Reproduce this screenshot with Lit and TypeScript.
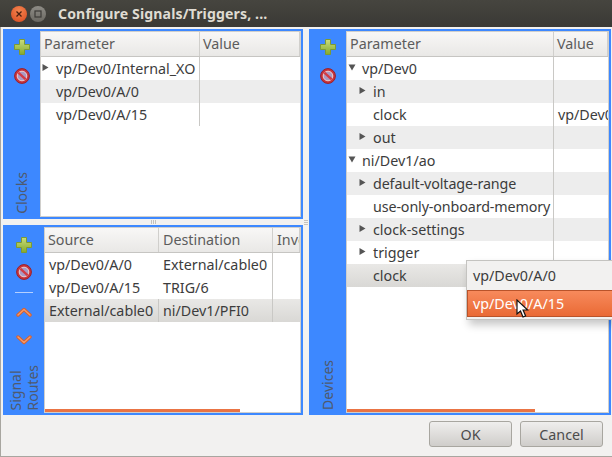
import { LitElement, html, css } from "lit";
import { customElement } from "lit/decorators.js";

const plus = html`<svg class="ico" width="16" height="16" viewBox="0 0 16 16"><defs><linearGradient id="pg" x1="0" y1="0" x2="0" y2="1"><stop offset="0" stop-color="#c9dd7c"/><stop offset="1" stop-color="#86a92c"/></linearGradient></defs><path d="M5.5 .5h5v5h5v5h-5v5h-5v-5h-5v-5h5z" fill="url(#pg)" stroke="#7c9a34"/></svg>`;
const stop = html`<svg class="ico" width="16" height="16" viewBox="0 0 16 16"><circle cx="8" cy="8" r="7.4" fill="#c9343c" stroke="#9a2029"/><circle cx="8" cy="8" r="4.8" fill="#a99ac4" stroke="#f0d0d0" stroke-width="1"/><path d="M4.3 4.6l7.4 6.8" stroke="#d23c44" stroke-width="2.4"/></svg>`;
const up = html`<svg class="ico" width="16" height="12" viewBox="0 0 16 12"><path d="M2 9l6-5.5 6 5.5" fill="none" stroke="#d9602c" stroke-width="3.4" stroke-linejoin="round" stroke-linecap="round"/><path d="M2 9l6-5.5 6 5.5" fill="none" stroke="#f59a6a" stroke-width="1.4" stroke-linejoin="round" stroke-linecap="round"/></svg>`;
const down = html`<svg class="ico" width="16" height="12" viewBox="0 0 16 12"><path d="M2 3l6 5.5 6-5.5" fill="none" stroke="#d9602c" stroke-width="3.4" stroke-linejoin="round" stroke-linecap="round"/><path d="M2 3l6 5.5 6-5.5" fill="none" stroke="#f59a6a" stroke-width="1.4" stroke-linejoin="round" stroke-linecap="round"/></svg>`;

type Row = { t: string; v?: string; a?: "r" | "d"; lvl?: number; cls?: string };

function arrow(a?: "r" | "d") {
  if (a === "r") return html`<svg class="arrsvg" width="7" height="9" viewBox="0 0 7 9"><path d="M0.5 1l6 3.5-6 3.5z" fill="#555"/></svg>`;
  if (a === "d") return html`<svg class="arrsvg" width="9" height="7" viewBox="0 0 9 7"><path d="M0.5 0.5h7l-3.5 6z" fill="#555"/></svg>`;
  return null;
}

@customElement("app-root")
export class AppRoot extends LitElement {
  static styles = css`
    :host { display: block; width: 612px; height: 457px; overflow: hidden; font-family: "Noto Sans", sans-serif; font-size: 14.3px; color: #3c3c3c; }
    .win { position: relative; width: 612px; height: 457px; display: flex; flex-direction: column; background: #f2f1f0; box-sizing: border-box; border-left: 1px solid #a8a6a0; border-bottom: 1px solid #a8a6a0; }
    .title { height: 27px; flex: none; margin-left: -1px; background: linear-gradient(#46453f, #3a3935); display: flex; align-items: center; padding-left: 11px; box-sizing: border-box; color: #dfdbd2; font-weight: 700; font-size: 14.1px; letter-spacing: 0.12px; }
    .wbtn { width: 16px; height: 16px; border-radius: 50%; display: flex; align-items: center; justify-content: center; flex: none; }
    .close { background: radial-gradient(circle at 50% 30%, #f4854f, #d8491f); margin-right: 3px; }
    .min { background: linear-gradient(#8e8c86, #6a6862); margin-right: 12px; }
    .main { flex: none; display: grid; grid-template-columns: 300px 6px 302px; margin: 2px 0 0 2px; height: 386px; }
    .lcol { display: flex; flex-direction: column; }
    .vsplit { height: 6px; display: flex; justify-content: center; align-items: center; gap: 1px; }
    .vsplit i { width: 1px; height: 4px; background: #c4c2bd; }
    .hsplit { display: flex; flex-direction: column; justify-content: center; align-items: center; gap: 1px; height: 6px; align-self: start; margin-top: 190px; }
    .hsplit i { width: 4px; height: 1px; background: #c4c2bd; }
    .panel { height: 190px; box-sizing: border-box; background: #3d88ff; display: flex; padding: 2px 2px 2px 0; }
    .panel.tall { height: 386px; }
    .side { flex: none; display: flex; flex-direction: column; align-items: center; box-sizing: border-box; }
    .w37 { width: 37px; padding-top: 8px; }
    .w41 { width: 41px; padding-top: 10px; }
    .ico { display: block; flex: none; }
    .gap1 { height: 13px; flex: none; }
    .gap2 { height: 11px; flex: none; }
    .sep { width: 18px; height: 1px; background: #b5d0ff; margin: 12px 0 13px; flex: none; }
    .gap3 { height: 16px; flex: none; }
    .vlab { margin-top: auto; writing-mode: vertical-rl; transform: rotate(180deg); color: #4f5a6e; font-size: 14px; line-height: 17px; padding-top: 3px; }
    .vlab.two { display: flex; flex-direction: column; }
    .table { flex: 1; min-width: 0; position: relative; display: flex; flex-direction: column; background: #fff; border: 1px solid #d0cfcc; overflow: hidden; }
    .row { display: grid; height: 23px; line-height: 23px; flex: none; }
    .head { height: 24px; line-height: 24px; background: linear-gradient(#f8f7f6, #e9e8e6); border-bottom: 1px solid #c6c5c2; color: #5c5c5c; }
    .head > div { padding-left: 3px; border-right: 1px solid #d0cfcc; overflow: hidden; white-space: nowrap; }
    .t2 .head > div + div { padding-left: 4px; }
    .cell { position: relative; white-space: nowrap; overflow: hidden; border-right: 1px solid #c9c8c5; }
    .cell.nb { border-right: 0; }
    .row.alt { background: #ededed; }
    .row.sel { background: linear-gradient(#e9e8e6, #d9d8d5); }
    .arr { position: absolute; }
    .arrsvg { display: block; }
    .t2 .cell { padding-left: 4px; }
    .noborder .cell { border-right: 0; }
    .tight { letter-spacing: -0.12px; }
    .sb { position: absolute; left: 0; bottom: 0; height: 3px; background: #ea7444; }
    .foot { flex: 1; display: flex; justify-content: flex-end; align-items: flex-start; gap: 8px; padding: 6px 9px 0 0; }
    .btn { width: 83px; height: 26px; box-sizing: border-box; border: 1px solid #a8a6a0; border-radius: 3px; background: linear-gradient(#efeeed, #cfcdca); display: flex; align-items: center; justify-content: center; color: #4c4c4c; }
    .popup { position: absolute; left: 465px; top: 260px; width: 147px; height: 60px; box-sizing: border-box; background: #f2f1f0; border: 1px solid #c4c3c0; border-right: 0; box-shadow: 3px 5px 8px rgba(0,0,0,.22); }
    .pi { height: 29px; line-height: 30px; padding-left: 6px; box-sizing: border-box; }
    .pi.hi { height: 27px; line-height: 25px; background: linear-gradient(#f78a5c, #ea6a35); border: 1px solid #b9532a; color: #fff; padding-left: 5px; }
    .cursor { position: absolute; left: 515px; top: 299px; }
  `;

  table(cols: string, head: string[], rows: Row[], sb = 0) {
    return html`<div class="table">
      <div class="row head" style="grid-template-columns:${cols}">${head.map((h) => html`<div>${h}</div>`)}</div>
      ${rows.map((r) => {
        const lvl = r.lvl ?? 0;
        return html`<div class="row ${r.cls ?? ""}" style="grid-template-columns:${cols}">
          <div class="cell" style="padding-left:${15 + lvl * 11}px">${r.a ? html`<span class="arr" style="left:${1 + lvl * 11}px;top:${r.a === "d" ? 7 : 6}px">${arrow(r.a)}</span>` : null}<span class="${r.t.length > 20 ? "tight" : ""}">${r.t}</span></div>
          <div class="cell nb" style="padding-left:4px">${r.v ?? ""}</div>
        </div>`;
      })}
      ${sb ? html`<div class="sb" style="width:${sb}px"></div>` : null}
    </div>`;
  }

  render() {
    const c1 = "159px 1fr";
    const c3 = "207px 1fr";
    const routes: [string, string, string][] = [
      ["vp/Dev0/A/0", "External/cable0", ""],
      ["vp/Dev0/A/15", "TRIG/6", ""],
      ["External/cable0", "ni/Dev1/PFI0", "sel"],
    ];
    const c2 = "114px 114px 1fr";
    return html`<div class="win">
      <div class="title">
        <span class="wbtn close"><svg width="8" height="8" viewBox="0 0 8 8"><path d="M1.5 1.5l5 5M6.5 1.5l-5 5" stroke="#4a2010" stroke-width="1.3"/></svg></span>
        <span class="wbtn min"><svg width="8" height="8" viewBox="0 0 8 8"><rect x="1" y="1" width="6" height="6" fill="none" stroke="#3c3b37" stroke-width="1.2"/></svg></span>
        <span>Configure Signals/Triggers, ...</span>
      </div>
      <div class="main">
        <div class="lcol">
          <div class="panel">
            <div class="side w37">${plus}<div class="gap1"></div>${stop}<div class="vlab">Clocks</div></div>
            ${this.table(c1, ["Parameter", "Value"], [
              { t: "vp/Dev0/Internal_XO", a: "r" },
              { t: "vp/Dev0/A/0", cls: "alt" },
              { t: "vp/Dev0/A/15" },
            ])}
          </div>
          <div class="vsplit"><i></i><i></i><i></i></div>
          <div class="panel">
            <div class="side w41">${plus}<div class="gap2"></div>${stop}<div class="sep"></div>${up}<div class="gap3"></div>${down}
              <div class="vlab two"><span>Signal</span><span>Routes</span></div></div>
            <div class="table t2">
              <div class="row head" style="grid-template-columns:${c2}"><div>Source</div><div>Destination</div><div>Inve</div></div>
              ${routes.map((r) => html`<div class="row ${r[2]}" style="grid-template-columns:${c2}">
                <div class="cell ${r[2] ? "" : "nb"}">${r[0]}</div><div class="cell">${r[1]}</div><div class="cell nb"></div></div>`)}
              <div class="sb" style="width:195px"></div>
            </div>
          </div>
        </div>
        <div class="hsplit"><i></i><i></i><i></i></div>
        <div class="panel tall">
          <div class="side w37">${plus}<div class="gap1"></div>${stop}<div class="vlab">Devices</div></div>
          ${this.table(c3, ["Parameter", "Value"], [
            { t: "vp/Dev0", a: "d" },
            { t: "in", a: "r", lvl: 1, cls: "alt" },
            { t: "clock", lvl: 1, v: "vp/Dev0/A/15" },
            { t: "out", a: "r", lvl: 1, cls: "alt" },
            { t: "ni/Dev1/ao", a: "d" },
            { t: "default-voltage-range", a: "r", lvl: 1, cls: "alt" },
            { t: "use-only-onboard-memory", lvl: 1 },
            { t: "clock-settings", a: "r", lvl: 1, cls: "alt" },
            { t: "trigger", a: "r", lvl: 1 },
            { t: "clock", lvl: 1, cls: "sel noborder" },
          ], 188)}
        </div>
      </div>
      <div class="foot"><div class="btn">OK</div><div class="btn">Cancel</div></div>
      <div class="popup"><div class="pi">vp/Dev0/A/0</div><div class="pi hi">vp/Dev0/A/15</div></div>
      <svg class="cursor" width="13" height="20" viewBox="0 0 13 20"><path d="M1 1v14l3.5-3 2.5 6 2.6-1-2.5-6h4.6z" fill="#fff" stroke="#111" stroke-width="1.2"/></svg>
    </div>`;
  }
}
